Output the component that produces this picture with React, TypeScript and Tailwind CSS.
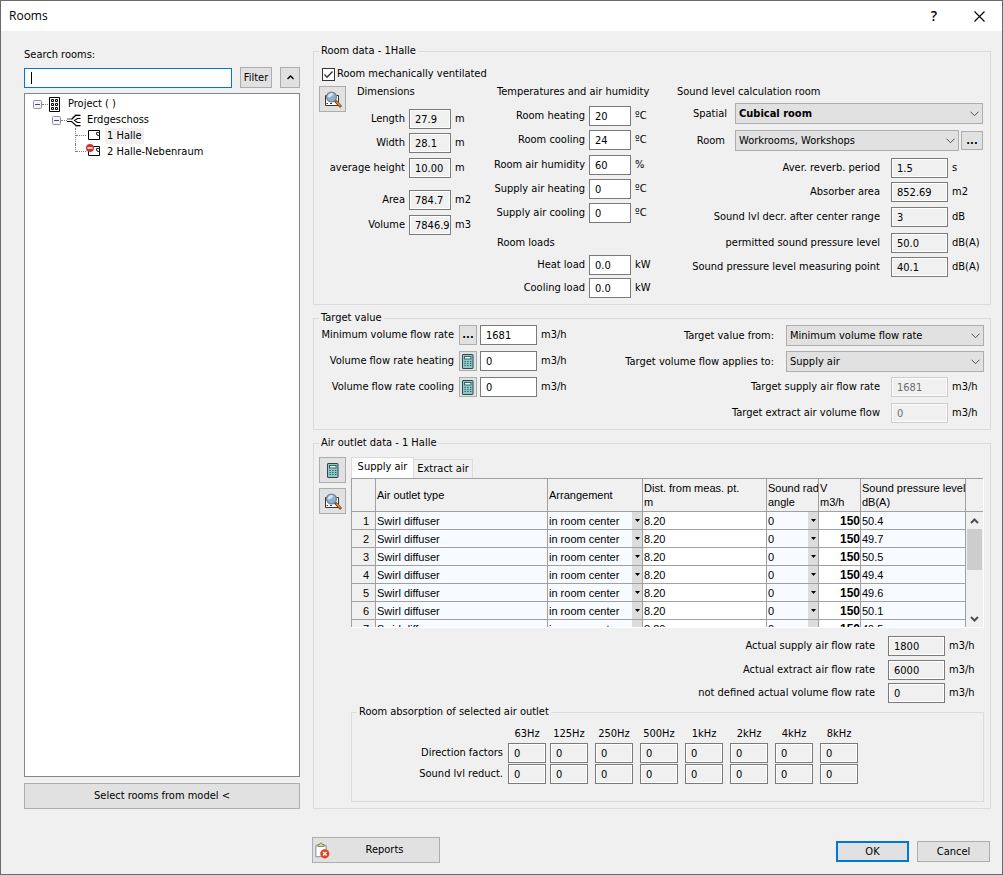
import React, { useState } from "react";

type FieldKind = "edit" | "readonly" | "disabled";

interface Field {
  label: string;
  value: string;
  unit: string;
  kind?: FieldKind;
  gap?: string;
}

interface Outlet {
  type: string;
  arrangement: string;
  distance: string;
  angle: string;
  flow: string;
  level: string;
}

const dimensions: Field[] = [
  { label: "Length", value: "27.9", unit: "m" },
  { label: "Width", value: "28.1", unit: "m", gap: "mt-1" },
  { label: "average height", value: "10.00", unit: "m", gap: "mt-[5px]" },
  { label: "Area", value: "784.7", unit: "m2", gap: "mt-3" },
  { label: "Volume", value: "7846.9", unit: "m3", gap: "mt-[5px]" },
];

const temperatures: Field[] = [
  { label: "Room heating", value: "20", unit: "ºC" },
  { label: "Room cooling", value: "24", unit: "ºC", gap: "mt-1" },
  { label: "Room air humidity", value: "60", unit: "%", gap: "mt-[5px]" },
  { label: "Supply air heating", value: "0", unit: "ºC", gap: "mt-1" },
  { label: "Supply air cooling", value: "0", unit: "ºC", gap: "mt-1" },
];

const loads: Field[] = [
  { label: "Heat load", value: "0.0", unit: "kW" },
  { label: "Cooling load", value: "0.0", unit: "kW", gap: "mt-[3px]" },
];

const soundLevels: Field[] = [
  { label: "Aver. reverb. period", value: "1.5", unit: "s" },
  { label: "Absorber area", value: "852.69", unit: "m2", gap: "mt-1" },
  { label: "Sound lvl decr. after center range", value: "3", unit: "dB", gap: "mt-[5px]" },
  { label: "permitted sound pressure level", value: "50.0", unit: "dB(A)", gap: "mt-[6px]" },
  { label: "Sound pressure level measuring point", value: "40.1", unit: "dB(A)", gap: "mt-1" },
];

const targets: Field[] = [
  { label: "Target supply air flow rate", value: "1681", unit: "m3/h", kind: "disabled" },
  { label: "Target extract air volume flow", value: "0", unit: "m3/h", kind: "disabled", gap: "mt-[6px]" },
];

const actuals: Field[] = [
  { label: "Actual supply air flow rate", value: "1800", unit: "m3/h" },
  { label: "Actual extract air flow rate", value: "6000", unit: "m3/h", gap: "mt-1" },
  { label: "not defined actual volume flow rate", value: "0", unit: "m3/h", gap: "mt-[3px]" },
];

const levels = ["50.4", "49.7", "50.5", "49.4", "49.6", "50.1", "49.5"];

const outlets: Outlet[] = levels.map((level) => ({
  type: "Swirl diffuser",
  arrangement: "in room center",
  distance: "8.20",
  angle: "0",
  flow: "150",
  level,
}));

const bands = ["63Hz", "125Hz", "250Hz", "500Hz", "1kHz", "2kHz", "4kHz", "8kHz"];

const toId = (text: string) => text.toLowerCase().replace(/[^a-z0-9]+/g, "-");

const inputStyles: Record<FieldKind, string> = {
  edit: "border-[#7a7a7a] bg-white",
  readonly: "border-[#7a7a7a] bg-[#f0f0f0] inset-ring inset-ring-white",
  disabled: "border-[#cccccc] bg-[#f0f0f0] text-[#6d6d6d] inset-ring inset-ring-white",
};

function TextBox({
  value,
  kind = "readonly",
  className = "",
  ...rest
}: {
  value: string;
  kind?: FieldKind;
  className?: string;
  id?: string;
  "aria-label"?: string;
}) {
  return (
    <input
      type="text"
      defaultValue={value}
      readOnly={kind === "readonly"}
      disabled={kind === "disabled"}
      className={`h-5 shrink-0 border pl-[5px] outline-none ${inputStyles[kind]} ${className}`}
      {...rest}
    />
  );
}

function FieldRow({
  field,
  kind = "readonly",
  boxWidth,
  unitWidth,
  labelGap = "mr-1",
}: {
  field: Field;
  kind?: FieldKind;
  boxWidth: string;
  unitWidth: string;
  labelGap?: string;
}) {
  const id = toId(field.label);
  return (
    <div className={`flex h-5 items-center ${field.gap ?? ""}`}>
      <label htmlFor={id} className={`flex-1 text-right whitespace-nowrap ${labelGap}`}>
        {field.label}
      </label>
      <TextBox id={id} value={field.value} kind={field.kind ?? kind} className={boxWidth} />
      <span className={`ml-1 shrink-0 ${unitWidth}`}>{field.unit}</span>
    </div>
  );
}

function Select({
  id,
  options,
  className = "",
  wrapper = "",
}: {
  id: string;
  options: string[];
  className?: string;
  wrapper?: string;
}) {
  return (
    <div className={`relative h-[21px] ${wrapper}`}>
      <select
        id={id}
        className={`h-full w-full appearance-none border border-[#adadad] bg-[#e1e1e1] pl-[3px] outline-none ${className}`}
      >
        {options.map((option) => (
          <option key={option}>{option}</option>
        ))}
      </select>
      <svg
        viewBox="0 0 9 6"
        className="pointer-events-none absolute top-[8px] right-1 h-[6px] w-[9px]"
        fill="none"
        stroke="#505050"
      >
        <path d="M0.5 0.7 4.5 4.7 8.5 0.7" />
      </svg>
    </div>
  );
}

function Button({
  children,
  className = "",
  ...rest
}: React.ButtonHTMLAttributes<HTMLButtonElement>) {
  return (
    <button
      type="button"
      className={`flex shrink-0 items-center justify-center border bg-[#e1e1e1] ${className}`}
      {...rest}
    >
      {children}
    </button>
  );
}

function Group({
  title,
  className = "",
  children,
}: {
  title: string;
  className?: string;
  children: React.ReactNode;
}) {
  return (
    <fieldset className={`min-w-0 border border-[#dcdcdc] pl-[5px] ${className}`}>
      <legend className="px-[2px] leading-[14px]">{title}</legend>
      {children}
    </fieldset>
  );
}

function MagnifierIcon() {
  return (
    <svg viewBox="0 0 18 17" className="h-[17px] w-[18px]">
      <path d="M3.5 4.5H1.5V14.5H14.5V4.5H12" fill="#ffffff" stroke="#333333" />
      <path d="M2.5 12.5H4M6 12.5H8" stroke="#333333" />
      <path d="M11.2 9.8 16.2 15" stroke="#7a4a20" strokeWidth="3" strokeLinecap="round" />
      <path d="M12.8 11 16.2 14.5" stroke="#e08a3a" strokeWidth="1.4" strokeLinecap="round" />
      <circle cx="7.5" cy="6" r="4.9" fill="#8fb0d0" stroke="#7c838c" strokeWidth="1.3" />
      <path d="M3.5 6.5A4 4 0 0 1 9.5 2.7C8.5 5 6.5 6.2 3.5 6.5Z" fill="#d3e2f0" />
    </svg>
  );
}

function CalculatorIcon() {
  return (
    <svg viewBox="0 0 12 15" className="h-[15px] w-[12px]">
      <rect x="0.5" y="0.5" width="10.5" height="14" rx="0.5" fill="#8ccaca" stroke="#2f4550" />
      <rect x="2.5" y="2.5" width="6.5" height="2.5" fill="#f0fcf8" stroke="#3c6468" />
      <path
        d="M2.5 7.5H9.5M2.5 9.5H9.5M2.5 11.5H9.5"
        stroke="#234a50"
        strokeDasharray="1.2 1.6"
      />
    </svg>
  );
}

function ReportIcon() {
  return (
    <svg viewBox="0 0 16 17" className="h-[17px] w-[16px]">
      <rect x="1" y="2.5" width="12" height="13" rx="1" fill="#b8c0cc" />
      <path d="M2 4H12V11L9 14.5H2Z" fill="#ffffff" stroke="#8a94a6" strokeWidth="0.8" />
      <path d="M4 4.5V2.5H5.5A1.5 1.5 0 0 1 8.5 2.5H10V4.5Z" fill="#d8d6a0" stroke="#77774a" strokeWidth="0.8" />
      <circle cx="10.8" cy="11.8" r="4.6" fill="#e8401c" />
      <path d="M9 10 12.6 13.6M12.6 10 9 13.6" stroke="#ffffff" strokeWidth="1.4" />
    </svg>
  );
}

function BuildingIcon() {
  return (
    <svg viewBox="0 0 11 15" className="h-[15px] w-[11px]" fill="none" stroke="#000000">
      <path d="M0.5 0.5H10.5V14.5H0.5Z" fill="#ffffff" />
      <path d="M2.5 2.5H4.5V4.5H2.5ZM6.5 2.5H8.5V4.5H6.5ZM2.5 6.5H4.5V8.5H2.5ZM6.5 6.5H8.5V8.5H6.5ZM2.5 10.5H4.5V12.5H2.5ZM6.5 10.5H8.5V12.5H6.5Z" />
    </svg>
  );
}

function FloorIcon() {
  return (
    <svg viewBox="0 0 14 13" className="h-[13px] w-[14px]" fill="none">
      <path d="M0 4.5H4.5L8 0.5H13.5M8 12.5H13.5M0 5.5H4" stroke="#a8a8a8" />
      <path d="M0 7.5H4.5L9 11.5H13.5M4.5 5.5 8.5 1.5H13.5" stroke="#000000" strokeWidth="1.1" />
      <path d="M13.5 4.5H10.5L7.5 6.5 10.5 8.5H13.5" stroke="#000000" strokeWidth="1.1" />
    </svg>
  );
}

function RoomIcon({ blocked = false }: { blocked?: boolean }) {
  return (
    <svg viewBox="0 0 15 13" className="h-[13px] w-[15px]" fill="none">
      <path d="M2.5 2.5H13.5V11.5H2.5Z" fill="#ffffff" stroke="#000000" />
      <path d="M13.5 4.5H10.5V6.5H11.5V7.5H13.5" stroke="#333333" />
      {blocked && (
        <>
          <circle cx="4" cy="4" r="4" fill="#cc3333" />
          <path d="M1.5 4H6.5" stroke="#ffffff" strokeWidth="1.6" />
        </>
      )}
    </svg>
  );
}

function Expander({ name }: { name: string }) {
  return (
    <button type="button" aria-label={`Collapse ${name}`} className="h-[9px] w-[9px]">
      <svg viewBox="0 0 9 9" className="h-[9px] w-[9px]">
        <rect x="0.5" y="0.5" width="8" height="8" rx="1" fill="#f4f4f4" stroke="#919191" />
        <path d="M2 4.5H7" stroke="#3a4a9a" />
      </svg>
    </button>
  );
}

function RoomTree() {
  const [selected, setSelected] = useState("1 Halle");

  return (
    <ul className="mt-[5px] flex-1 border border-[#828790] bg-white pt-[2px]">
      <li>
        <div className="flex h-4 items-center pl-2">
          <Expander name="Project" />
          <span className="mr-[1px] w-[6px] border-t border-dotted border-[#808080]" />
          <BuildingIcon />
          <span className="ml-2">Project ( )</span>
        </div>
        <ul>
          <li>
            <div className="flex h-4 items-center pl-[27px]">
              <Expander name="Erdgeschoss" />
              <span className="w-[6px] border-t border-dotted border-[#808080]" />
              <FloorIcon />
              <span className="ml-[6px]">Erdgeschoss</span>
            </div>
            <ul>
              {["1 Halle", "2 Halle-Nebenraum"].map((room, index) => (
                <li key={room} className="flex h-4 pl-[50px]">
                  <span
                    className={`border-l border-dotted border-[#808080] ${index === 0 ? "h-4" : "h-2"}`}
                  />
                  <span className="h-2 w-[10px] border-b border-dotted border-[#808080]" />
                  <RoomIcon blocked={index === 1} />
                  <button
                    type="button"
                    onClick={() => setSelected(room)}
                    className={`ml-[4px] h-4 px-[2px] ${selected === room ? "bg-[#f0f0f0]" : ""}`}
                  >
                    {room}
                  </button>
                </li>
              ))}
            </ul>
          </li>
        </ul>
      </li>
    </ul>
  );
}

function DropArrow() {
  return (
    <span className="flex h-[17px] w-[10px] shrink-0 items-center justify-center bg-[#dcdcdc]">
      <svg viewBox="0 0 5 3" className="h-[3px] w-[5px]">
        <path d="M0 0H5L2.5 3Z" fill="#000000" />
      </svg>
    </span>
  );
}

function OutletTable() {
  const head = "border border-[#a0a0a0] px-[1px] text-left font-normal whitespace-nowrap overflow-hidden";
  const cell = "h-[18px] border border-[#a0a0a0] pl-[1px] whitespace-nowrap";

  return (
    <div className="flex h-[150px] overflow-hidden border-r border-b border-white font-['Liberation_Sans',sans-serif] leading-[14px]">
      <div className="min-w-0 flex-1 overflow-hidden">
        <table className="w-full table-fixed border-collapse">
          <colgroup>
            <col className="w-6" />
            <col />
            <col className="w-[95px]" />
            <col className="w-[124px]" />
            <col className="w-[52px]" />
            <col className="w-[42px]" />
            <col className="w-[105px]" />
          </colgroup>
          <thead>
            <tr className="h-[33px]">
              <th className={head} aria-label="Row" />
              <th className={head}>Air outlet type</th>
              <th className={head}>Arrangement</th>
              <th className={head}>Dist. from meas. pt.<br />m</th>
              <th className={head}>Sound rad<br />angle</th>
              <th className={head}>V<br />m3/h</th>
              <th className={head}>Sound pressure level<br />dB(A)</th>
            </tr>
          </thead>
          <tbody>
            {outlets.map((outlet, index) => (
              <tr key={index} className="bg-[#f7fbff]">
                <td className={`${cell} bg-[#f0f0f0] pr-[6px] text-right`}>{index + 1}</td>
                <td className={cell}>{outlet.type}</td>
                <td className={cell}>
                  <div className="flex items-center justify-between">
                    {outlet.arrangement}
                    <DropArrow />
                  </div>
                </td>
                <td className={`${cell} bg-white`}>{outlet.distance}</td>
                <td className={cell}>
                  <div className="flex items-center justify-between">
                    {outlet.angle}
                    <DropArrow />
                  </div>
                </td>
                <td className={`${cell} bg-white text-right text-xs font-bold`}>{outlet.flow}</td>
                <td className={cell}>{outlet.level}</td>
              </tr>
            ))}
          </tbody>
        </table>
      </div>
      <div className="flex w-[17px] flex-col">
        <div className="h-[34px] border-y border-[#a0a0a0]" />
        <button type="button" aria-label="Scroll up" className="flex h-[17px] items-center justify-center">
          <svg viewBox="0 0 9 6" className="h-[6px] w-[9px]" fill="none" stroke="#505050" strokeWidth="2">
            <path d="M1 5 4.5 1.5 8 5" />
          </svg>
        </button>
        <div className="mx-[1px] h-[41px] bg-[#cdcdcd]" />
        <button type="button" aria-label="Scroll down" className="mt-auto flex h-[17px] items-center justify-center">
          <svg viewBox="0 0 9 6" className="h-[6px] w-[9px]" fill="none" stroke="#505050" strokeWidth="2">
            <path d="M1 1 4.5 4.5 8 1" />
          </svg>
        </button>
      </div>
    </div>
  );
}

function RoomData() {
  return (
    <Group title="Room data - 1Halle" className="pr-[7px] pb-[6px]">
      <label className="mt-2 ml-[3px] flex h-4 items-center gap-[2px]">
        <span className="relative h-[13px] w-[13px]">
          <input
            type="checkbox"
            defaultChecked
            className="peer block h-[13px] w-[13px] appearance-none border border-[#333333] bg-white"
          />
          <svg
            viewBox="0 0 13 13"
            className="pointer-events-none absolute inset-0 hidden peer-checked:block"
            fill="none"
            stroke="#333333"
            strokeWidth="1.3"
          >
            <path d="M2.5 6.5 5 9.2 10.5 3.5" />
          </svg>
        </span>
        Room mechanically ventilated
      </label>
      <div className="mt-1 flex">
        <div className="w-[172px] shrink-0">
          <div className="flex h-[23px] items-start gap-[11px]">
            <Button aria-label="Inspect room" className="h-[26px] w-[27px] border-[#adadad]">
              <MagnifierIcon />
            </Button>
            <h3 className="-mt-[2px]">Dimensions</h3>
          </div>
          {dimensions.map((field) => (
            <FieldRow key={field.label} field={field} boxWidth="w-[42px]" unitWidth="w-9" />
          ))}
        </div>
        <div className="w-[186px] shrink-0">
          <h3 className="-mt-[2px] mb-[6px] pl-[6px]">Temperatures and air humidity</h3>
          {temperatures.map((field) => (
            <FieldRow key={field.label} field={field} kind="edit" boxWidth="w-[42px]" unitWidth="w-[42px]" />
          ))}
          <h3 className="mt-3 mb-1 pl-[6px]">Room loads</h3>
          {loads.map((field) => (
            <FieldRow key={field.label} field={field} kind="edit" boxWidth="w-[42px]" unitWidth="w-[42px]" />
          ))}
        </div>
        <div className="min-w-0 flex-1">
          <h3 className="-mt-[2px] mb-[3px]">Sound level calculation room</h3>
          <div className="flex items-center">
            <label htmlFor="spatial" className="w-[50px] text-right">Spatial</label>
            <Select id="spatial" options={["Cubical room"]} className="font-bold" wrapper="ml-2 flex-1" />
          </div>
          <div className="mt-[6px] flex items-center">
            <label htmlFor="room" className="w-12 text-right">Room</label>
            <Select id="room" options={["Workrooms, Workshops"]} wrapper="ml-[10px] flex-1" />
            <Button aria-label="Choose room" className="ml-[2px] h-[19px] w-[22px] border-[#adadad] font-bold">
              ...
            </Button>
          </div>
          <div className="mt-[7px]">
            {soundLevels.map((field) => (
              <FieldRow
                key={field.label}
                field={field}
                boxWidth="w-[57px]"
                unitWidth="w-[31px]"
                labelGap="mr-[11px]"
              />
            ))}
          </div>
        </div>
      </div>
    </Group>
  );
}

function TargetValue() {
  const flows = [
    { label: "Minimum volume flow rate", value: "1681", icon: "..." },
    { label: "Volume flow rate heating", value: "0", icon: <CalculatorIcon /> },
    { label: "Volume flow rate cooling", value: "0", icon: <CalculatorIcon /> },
  ];

  return (
    <Group title="Target value" className="mt-[6px] pr-[6px] pb-[6px]">
      <div className="flex">
        <div className="flex w-[264px] shrink-0 flex-col gap-[6px]">
          {flows.map((flow) => (
            <div key={flow.label} className="flex h-5 items-center">
              <label htmlFor={toId(flow.label)} className="w-[135px] text-right whitespace-nowrap">
                {flow.label}
              </label>
              <Button aria-label={`Set ${flow.label}`} className="ml-[5px] h-5 w-[18px] border-[#adadad] font-bold">
                {flow.icon}
              </Button>
              <TextBox id={toId(flow.label)} value={flow.value} kind="edit" className="ml-[3px] w-[57px]" />
              <span className="ml-1">m3/h</span>
            </div>
          ))}
        </div>
        <div className="min-w-0 flex-1">
          <div className="flex items-center">
            <label htmlFor="target-from" className="flex-1 text-right">Target value from:</label>
            <Select id="target-from" options={["Minimum volume flow rate"]} wrapper="ml-3 w-[198px]" />
          </div>
          <div className="mt-[5px] mb-[5px] flex items-center">
            <label htmlFor="target-applies" className="flex-1 text-right">Target volume flow applies to:</label>
            <Select id="target-applies" options={["Supply air", "Extract air"]} wrapper="ml-3 w-[198px]" />
          </div>
          {targets.map((field) => (
            <FieldRow
              key={field.label}
              field={field}
              boxWidth="w-[57px]"
              unitWidth="w-8"
              labelGap="mr-[11px]"
            />
          ))}
        </div>
      </div>
    </Group>
  );
}

function AirOutletData() {
  const [tab, setTab] = useState("Supply air");

  return (
    <Group title="Air outlet data - 1 Halle" className="mt-[6px] pr-[6px] pb-[6px]">
      <div className="flex gap-[5px] pt-[7px]">
        <div className="flex shrink-0 flex-col gap-[5px]">
          <Button aria-label="Calculate" className="h-[26px] w-[27px] border-[#adadad]">
            <CalculatorIcon />
          </Button>
          <Button aria-label="Inspect outlet" className="h-[26px] w-[27px] border-[#adadad]">
            <MagnifierIcon />
          </Button>
        </div>
        <div className="min-w-0 flex-1">
          <div role="tablist" className="flex h-[21px] items-end">
            {["Supply air", "Extract air"].map((name) => (
              <button
                key={name}
                type="button"
                role="tab"
                aria-selected={tab === name}
                onClick={() => setTab(name)}
                className={`border-[#dcdcdc] whitespace-nowrap ${
                  tab === name
                    ? "h-[21px] w-[63px] border-x border-t bg-white pb-[2px]"
                    : "h-[19px] w-[59px] border-t border-r"
                }`}
              >
                {name}
              </button>
            ))}
          </div>
          <OutletTable />
          <div className="mt-2">
            {actuals.map((field) => (
              <FieldRow
                key={field.label}
                field={field}
                boxWidth="w-[57px]"
                unitWidth="w-[35px]"
                labelGap="mr-[13px]"
              />
            ))}
          </div>
          <Group title="Room absorption of selected air outlet" className="mt-[2px] pt-[7px] pb-[17px]">
            <div className="grid grid-cols-[151px_42px_repeat(7,45px)] items-center gap-y-[1px]">
              <span />
              {bands.map((band) => (
                <span key={band} className="w-[38px] text-center">{band}</span>
              ))}
              {["Direction factors", "Sound lvl reduct."].map((row) => (
                <React.Fragment key={row}>
                  <span className="pr-[5px] text-right">{row}</span>
                  {bands.map((band) => (
                    <TextBox key={band} value="0" aria-label={`${row} ${band}`} className="w-[38px]" />
                  ))}
                </React.Fragment>
              ))}
            </div>
          </Group>
        </div>
      </div>
    </Group>
  );
}

export default function App() {
  return (
    <div className="flex min-h-screen flex-col border border-[#6b6b6b] bg-[#f0f0f0] font-['DejaVu_Sans_Condensed','DejaVu_Sans',sans-serif] text-[11px] leading-4 text-black">
      <header className="flex h-[30px] shrink-0 items-center bg-white pr-[17px] pl-2">
        <h1 className="flex-1 font-['Open_Sans',sans-serif] text-xs">Rooms</h1>
        <button type="button" aria-label="Help" className="w-10 font-['Open_Sans',sans-serif] text-sm font-semibold">
          ?
        </button>
        <button type="button" aria-label="Close" className="ml-5">
          <svg viewBox="0 0 11 11" className="h-[11px] w-[11px]" stroke="#000000" strokeWidth="1.1">
            <path d="M0.5 0.5 10.5 10.5M10.5 0.5 0.5 10.5" />
          </svg>
        </button>
      </header>

      <main className="flex gap-[13px] pr-[11px] pl-[23px]">
        <section className="flex w-[276px] shrink-0 flex-col pt-4">
          <label htmlFor="search">Search rooms:</label>
          <div className="mt-1 flex items-center gap-2">
            <div className="relative h-5 flex-1">
              <input
                id="search"
                type="text"
                className="h-5 w-full border border-[#0078d7] bg-white px-[6px] caret-transparent outline-none"
              />
              <span className="pointer-events-none absolute top-1 left-[7px] h-3 w-px bg-black" />
            </div>
            <Button className="h-[21px] w-8 border-[#adadad]">Filter</Button>
            <Button aria-label="Previous match" className="h-[21px] w-5 border-[#adadad]">
              <svg viewBox="0 0 7 5" className="h-[5px] w-[7px]" fill="none" stroke="#000000" strokeWidth="1.4">
                <path d="M0.5 4 3.5 1 6.5 4" />
              </svg>
            </Button>
          </div>
          <RoomTree />
          <Button className="mt-[6px] h-[26px] border-[#adadad]">Select rooms from model &lt;</Button>
        </section>

        <section className="min-w-0 flex-1 pt-[13px]">
          <RoomData />
          <TargetValue />
          <AirOutletData />
        </section>
      </main>

      <footer className="mt-[28px] flex items-start gap-2 pr-[12px] pl-[311px]">
        <Button className="relative mr-auto h-[26px] w-[128px] border-[#adadad] pl-[17px]">
          <span className="absolute left-[1px]">
            <ReportIcon />
          </span>
          Reports
        </Button>
        <Button className="mt-1 h-[21px] w-[73px] border-2 border-[#0078d7]">OK</Button>
        <Button className="mt-1 h-[21px] w-[73px] border-[#adadad]">Cancel</Button>
      </footer>
    </div>
  );
}
